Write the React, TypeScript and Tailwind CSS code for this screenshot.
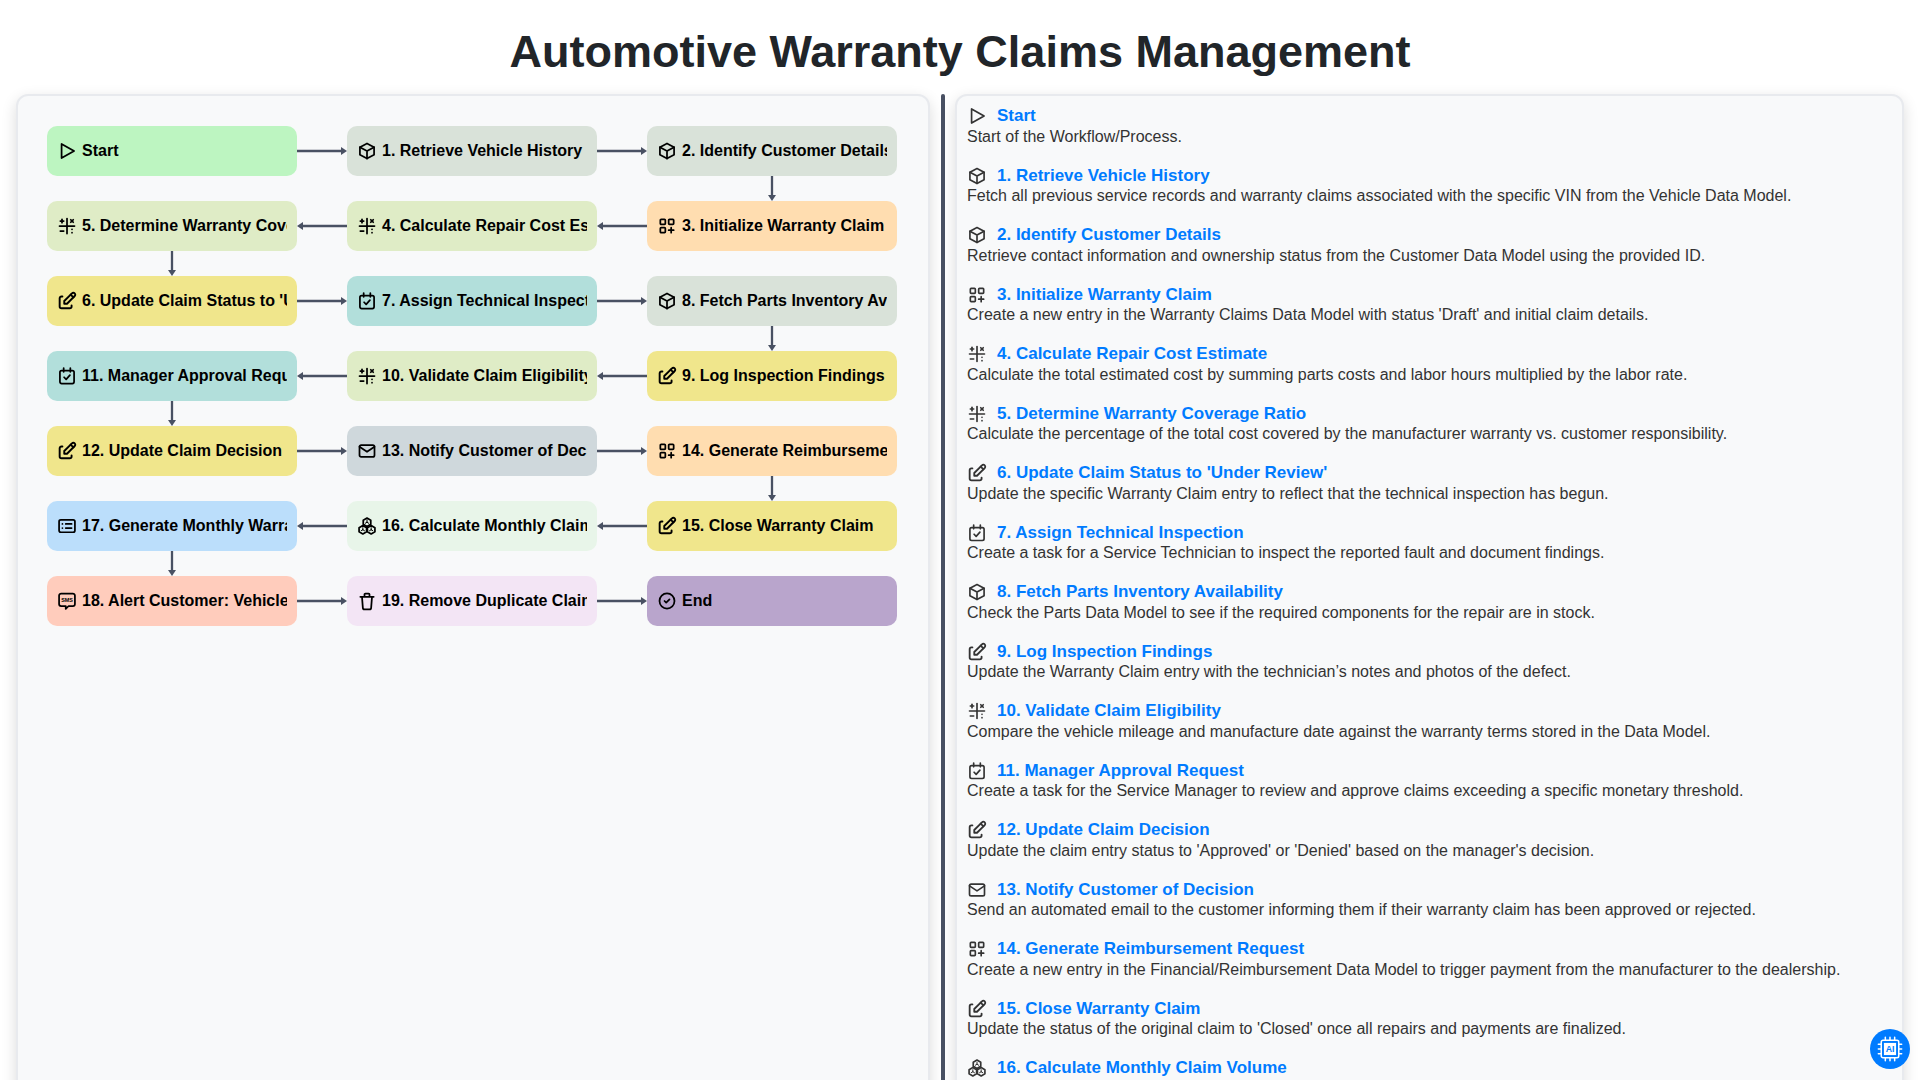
import {
  TbCircleCheck,
  TbEdit,
  TbLayoutGridAdd,
  TbMail,
  TbMathSymbols,
} from "react-icons/tb";

type IconProps = { className?: string };

const svgProps = {
  viewBox: "0 0 24 24",
  fill: "none",
  stroke: "currentColor",
  strokeWidth: 2,
  strokeLinecap: "round",
  strokeLinejoin: "round",
} as const;

const Play = ({ className }: IconProps) => (
  <svg {...svgProps} className={className}>
    <path d="M5.5 3.5v17l15-8.5z" />
  </svg>
);

const Cube = ({ className }: IconProps) => (
  <svg {...svgProps} className={className}>
    <path d="M12 3l8.5 4.5v9L12 21l-8.5-4.5v-9z" />
    <path d="M3.5 7.5L12 12l8.5-4.5M12 12v9" />
  </svg>
);

const Edit = ({ className }: IconProps) => <TbEdit className={`${className} scale-110`} />;

const CalendarCheck = ({ className }: IconProps) => (
  <svg {...svgProps} className={className}>
    <rect x="3.5" y="5.5" width="17" height="15.5" rx="2" />
    <path d="M8 2.5v4.5M16 2.5v4.5M8.5 13.5l2.5 2.5 4.5-5" />
  </svg>
);

const ListBox = ({ className }: IconProps) => (
  <svg {...svgProps} className={className}>
    <rect x="2.5" y="4.5" width="19" height="15" rx="2" />
    <path d="M6.5 9.5h.01M6.5 14.5h.01M10.5 9.5h7M10.5 14.5h7" />
  </svg>
);

const SmsBubble = ({ className }: IconProps) => (
  <svg {...svgProps} className={className}>
    <path d="M5 3h14a2.5 2.5 0 0 1 2.5 2.5v10a2.5 2.5 0 0 1-2.5 2.5h-5l-3.5 3.5v-3.5H5a2.5 2.5 0 0 1-2.5-2.5v-10A2.5 2.5 0 0 1 5 3z" />
    <text x="12" y="13" textAnchor="middle" fontSize="6.5" fontWeight="700" fill="currentColor" stroke="none" fontFamily="Liberation Sans">SMS</text>
  </svg>
);

const Bucket = ({ className }: IconProps) => (
  <svg {...svgProps} className={className}>
    <path d="M4 7h16M6 7l1 13a2 2 0 0 0 2 2h6a2 2 0 0 0 2-2l1-13M9 7V4a1 1 0 0 1 1-1h4a1 1 0 0 1 1 1v3" />
  </svg>
);

const Hexes = ({ className }: IconProps) => (
  <svg {...svgProps} strokeWidth={1.8} className={className}>
    <path d="M12 2.5l4.5 2.5v5L12 12.5 7.5 10V5z" />
    <path d="M7 11.5l4.5 2.5v5L7 21.5 2.5 19v-5z" />
    <path d="M17 11.5l4.5 2.5v5L17 21.5 12.5 19v-5z" />
    <path d="M12 7.5V5M7 16.5V14M17 16.5V14M12 7.5l-2 1.2M12 7.5l2 1.2M7 16.5l-2 1.2M7 16.5l2 1.2M17 16.5l-2 1.2M17 16.5l2 1.2" strokeWidth={1.2} />
  </svg>
);

type Dir = "right" | "left" | "down" | null;

type Step = {
  title: string;
  desc: string;
  Icon: React.ComponentType<IconProps>;
  color: string;
  arrow: Dir;
};

const green = "bg-[#bdf5c1]";
const sage = "bg-[#d9e2d9]";
const peach = "bg-[#ffddb0]";
const lime = "bg-[#dfecc6]";
const yellow = "bg-[#f0e68c]";
const teal = "bg-[#b2dfdb]";
const slate = "bg-[#cfd8dc]";
const mint = "bg-[#e8f5e9]";
const blue = "bg-[#bbdefb]";
const coral = "bg-[#ffccbc]";
const lilac = "bg-[#f3e5f5]";
const purple = "bg-[#b9a5cc]";

const steps: Step[] = [
  { title: "Start", desc: "Start of the Workflow/Process.", Icon: Play, color: green, arrow: "right" },
  { title: "1. Retrieve Vehicle History", desc: "Fetch all previous service records and warranty claims associated with the specific VIN from the Vehicle Data Model.", Icon: Cube, color: sage, arrow: "right" },
  { title: "2. Identify Customer Details", desc: "Retrieve contact information and ownership status from the Customer Data Model using the provided ID.", Icon: Cube, color: sage, arrow: "down" },
  { title: "3. Initialize Warranty Claim", desc: "Create a new entry in the Warranty Claims Data Model with status 'Draft' and initial claim details.", Icon: TbLayoutGridAdd, color: peach, arrow: "left" },
  { title: "4. Calculate Repair Cost Estimate", desc: "Calculate the total estimated cost by summing parts costs and labor hours multiplied by the labor rate.", Icon: TbMathSymbols, color: lime, arrow: "left" },
  { title: "5. Determine Warranty Coverage Ratio", desc: "Calculate the percentage of the total cost covered by the manufacturer warranty vs. customer responsibility.", Icon: TbMathSymbols, color: lime, arrow: "down" },
  { title: "6. Update Claim Status to 'Under Review'", desc: "Update the specific Warranty Claim entry to reflect that the technical inspection has begun.", Icon: Edit, color: yellow, arrow: "right" },
  { title: "7. Assign Technical Inspection", desc: "Create a task for a Service Technician to inspect the reported fault and document findings.", Icon: CalendarCheck, color: teal, arrow: "right" },
  { title: "8. Fetch Parts Inventory Availability", desc: "Check the Parts Data Model to see if the required components for the repair are in stock.", Icon: Cube, color: sage, arrow: "down" },
  { title: "9. Log Inspection Findings", desc: "Update the Warranty Claim entry with the technician\u2019s notes and photos of the defect.", Icon: Edit, color: yellow, arrow: "left" },
  { title: "10. Validate Claim Eligibility", desc: "Compare the vehicle mileage and manufacture date against the warranty terms stored in the Data Model.", Icon: TbMathSymbols, color: lime, arrow: "left" },
  { title: "11. Manager Approval Request", desc: "Create a task for the Service Manager to review and approve claims exceeding a specific monetary threshold.", Icon: CalendarCheck, color: teal, arrow: "down" },
  { title: "12. Update Claim Decision", desc: "Update the claim entry status to 'Approved' or 'Denied' based on the manager's decision.", Icon: Edit, color: yellow, arrow: "right" },
  { title: "13. Notify Customer of Decision", desc: "Send an automated email to the customer informing them if their warranty claim has been approved or rejected.", Icon: TbMail, color: slate, arrow: "right" },
  { title: "14. Generate Reimbursement Request", desc: "Create a new entry in the Financial/Reimbursement Data Model to trigger payment from the manufacturer to the dealership.", Icon: TbLayoutGridAdd, color: peach, arrow: "down" },
  { title: "15. Close Warranty Claim", desc: "Update the status of the original claim to 'Closed' once all repairs and payments are finalized.", Icon: Edit, color: yellow, arrow: "left" },
  { title: "16. Calculate Monthly Claim Volume", desc: "", Icon: Hexes, color: mint, arrow: "left" },
  { title: "17. Generate Monthly Warranty Report", desc: "", Icon: ListBox, color: blue, arrow: "down" },
  { title: "18. Alert Customer: Vehicle Ready", desc: "", Icon: SmsBubble, color: coral, arrow: "right" },
  { title: "19. Remove Duplicate Claims", desc: "", Icon: Bucket, color: lilac, arrow: "right" },
  { title: "End", desc: "", Icon: TbCircleCheck, color: purple, arrow: null },
];

// rows snake left-right, then right-left
const gridOrder = [0, 1, 2, 5, 4, 3, 6, 7, 8, 11, 10, 9, 12, 13, 14, 17, 16, 15, 18, 19, 20];

const Arrow = ({ dir }: { dir: Dir }) => {
  if (dir === "right")
    return (
      <svg viewBox="0 0 50 10" className="absolute left-full top-1/2 -translate-y-1/2 w-[50px] h-[10px] text-[#495163]">
        <path d="M0 5h45" stroke="currentColor" strokeWidth="2.3" />
        <path d="M44 1l6 4-6 4z" fill="currentColor" />
      </svg>
    );
  if (dir === "left")
    return (
      <svg viewBox="0 0 50 10" className="absolute right-full top-1/2 -translate-y-1/2 w-[50px] h-[10px] text-[#495163]">
        <path d="M5 5h45" stroke="currentColor" strokeWidth="2.3" />
        <path d="M6 1l-6 4 6 4z" fill="currentColor" />
      </svg>
    );
  if (dir === "down")
    return (
      <svg viewBox="0 0 10 25" className="absolute top-full left-1/2 -translate-x-1/2 w-[10px] h-[25px] text-[#495163]">
        <path d="M5 0v20" stroke="currentColor" strokeWidth="2.3" />
        <path d="M1 19l4 6 4-6z" fill="currentColor" />
      </svg>
    );
  return null;
};

const Node = ({ step }: { step: Step }) => (
  <div className={`relative h-[50px] rounded-[10px] ${step.color} flex items-center px-[10px]`}>
    <div className="flex items-center overflow-hidden whitespace-nowrap w-full font-bold text-base text-black">
      <step.Icon className="w-5 h-5 shrink-0 mr-[5px] stroke-[2.1]" />
      <span>{step.title}</span>
    </div>
    <Arrow dir={step.arrow} />
  </div>
);

export default function App() {
  return (
    <div className="h-screen overflow-hidden bg-white font-['Liberation_Sans',Arial,sans-serif] text-[#212529]">
      <h1 className="text-[45px] font-bold text-center leading-[52px] pt-[26px] pb-[16px]">
        Automotive Warranty Claims Management
      </h1>
      <div className="flex items-stretch px-4 h-[1100px]">
        <div className="w-[914px] shrink-0 rounded-xl border-2 border-[#e8eaee] bg-[#f8f9fa] shadow-[0_5px_15px_rgba(0,0,0,0.14)] pl-[29px] pt-[30px]">
          <div className="grid grid-cols-[250px_250px_250px] gap-x-[50px] gap-y-[25px]">
            {gridOrder.map((i) => (
              <Node key={i} step={steps[i]} />
            ))}
          </div>
        </div>
        <div className="w-[4px] ml-[11px] mr-[10px] shrink-0 rounded-t-sm bg-[#495163]" />
        <div className="w-[949px] shrink-0 rounded-xl border-2 border-[#e8eaee] bg-[#f8f9fa] shadow-[0_5px_15px_rgba(0,0,0,0.14)] pl-[10px] pt-[10px]">
          {steps.slice(0, 17).map((s) => (
            <div key={s.title} className="h-[59.5px]">
              <div className="flex items-center h-[20px] text-[17px] font-bold text-[#007bff]">
                <s.Icon className="w-5 h-5 shrink-0 mr-[10px] text-[#333] stroke-2" />
                <span>{s.title}</span>
              </div>
              <p className="mt-[0.6px] text-base leading-[20px] text-[#333]">{s.desc}</p>
            </div>
          ))}
        </div>
      </div>
      <button className="fixed right-[10px] bottom-[11px] w-10 h-10 rounded-full bg-[#007bff] flex items-center justify-center">
        <svg viewBox="0 0 24 24" className="w-7 h-7" fill="none" stroke="white" strokeWidth="1.3" strokeLinecap="round">
          <rect x="4.5" y="4.5" width="15" height="15" rx="1.5" />
          <rect x="6.8" y="6.8" width="10.4" height="10.4" fill="white" stroke="none" />
          <path d="M8 2v2M12 2v2M16 2v2M8 20v2M12 20v2M16 20v2M2 8h2M2 12h2M2 16h2M20 8h2M20 12h2M20 16h2" />
          <text x="12" y="14.8" textAnchor="middle" fontSize="7.5" fontWeight="700" fill="#007bff" stroke="none" fontFamily="Liberation Sans">AI</text>
        </svg>
      </button>
    </div>
  );
}
